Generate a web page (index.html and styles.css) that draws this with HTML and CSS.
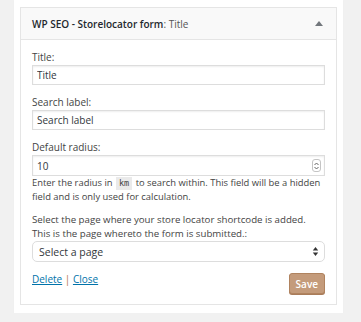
FILE: index.html
```html
<!DOCTYPE html>
<html lang="en">
<head>
    <meta charset="UTF-8">
    <title>WP SEO - Storelocator form</title>
    <link rel="stylesheet" href="styles.css">
</head>
<body>
    <div class="sidebar">
        <div class="widget">
            <div class="widget-top">
                <h3>WP SEO - Storelocator form<span class="in-title">: Title</span></h3>
                <span class="toggle"></span>
            </div>

            <div class="widget-inside">
                <p class="field">
                    <label for="title">Title:</label>
                    <input class="text" id="title" type="text" value="Title">
                </p>
                <p class="field">
                    <label for="search-label">Search label:</label>
                    <input class="text" id="search-label" type="text" value="Search label">
                </p>
                <div class="field">
                    <label for="radius">Default radius:</label>
                    <div class="number">
                        <input id="radius" type="text" value="10">
                        <span class="spin">
                            <svg width="7" height="10" viewBox="0 0 7 10"><path d="M1.5 4 L3.5 2 L5.5 4" fill="none" stroke="#666" stroke-width="1"/><path d="M1.5 6 L3.5 8 L5.5 6" fill="none" stroke="#666" stroke-width="1"/></svg>
                        </span>
                    </div>
                    <p class="help">Enter the radius in <code>km</code> to search within. This field will be a hidden field and is only used for calculation.</p>
                </div>
                <div class="field">
                    <label class="long" for="page">Select the page where your store locator shortcode is added. This is the page whereto the form is submitted.:</label>
                    <div class="select">
                        <select id="page">
                            <option>Select a page</option>
                        </select>
                        <svg width="7" height="11" viewBox="0 0 7 11"><path d="M0.8 4.5 L3.5 1 L6.2 4.5 Z" fill="#333"/><path d="M0.8 6.5 L3.5 10 L6.2 6.5 Z" fill="#333"/></svg>
                    </div>
                </div>

                <div class="actions">
                    <div class="links">
                        <a href="#">Delete</a> <span class="sep">|</span> <a href="#">Close</a>
                    </div>
                    <button type="button">Save</button>
                </div>
            </div>
        </div>
    </div>
</body>
</html>
```

FILE: styles.css
```css
body {
    margin: 0;
    background-color: #f1f1f1;
    font-family: 'Open Sans', sans-serif;
    font-size: 10px;
    color: #444;
}

.sidebar {
    width: 317px;
    margin-left: 14px;
    height: 299px;
    padding: 7px 6px 7px 6px;
    background-color: #fff;
    box-shadow: 0 1px 1px rgba(0, 0, 0, 0.04);
}

.widget {
    border: 1px solid #e5e5e5;
    background-color: #fff;
}

.widget-top {
    display: flex;
    align-items: center;
    justify-content: space-between;
    height: 31px;
    padding: 0 13px 0 11px;
    background-color: #f9f9f9;
    border-bottom: 1px solid #e5e5e5;
}

.widget-top h3 {
    margin: 0;
    font-size: 10px;
    font-weight: 600;
    color: #23282d;
}

.in-title {
    font-weight: 400;
    color: #555;
}

.toggle {
    width: 0;
    height: 0;
    border-left: 4px solid transparent;
    border-right: 4px solid transparent;
    border-bottom: 5px solid #72777c;
    margin-top: -1px;
}

.widget-inside {
    padding: 9px 11px 10px 11px;
}

.field {
    margin: 0 0 9px 0;
}

label {
    display: block;
    line-height: 16px;
}

label.long {
    font-size: 9.7px;
    line-height: 14px;
}

input.text,
.number {
    box-sizing: border-box;
    width: 100%;
    height: 20px;
    margin: 0;
    border: 1px solid #ddd;
    box-shadow: inset 0 1px 2px rgba(0, 0, 0, 0.07);
    background-color: #fff;
}

input.text,
.number input {
    padding: 0 4px;
    font-family: 'Open Sans', sans-serif;
    font-size: 10px;
    color: #32373c;
}

.number {
    display: flex;
    align-items: center;
    height: 21px;
    padding-right: 3px;
}

.number input {
    flex: 1;
    border: none;
    background: transparent;
    outline: none;
    height: 19px;
}

.spin {
    display: flex;
    align-items: center;
    justify-content: center;
    width: 7px;
    height: 11px;
    border: 1px solid #c4c4c4;
    border-radius: 3px;
}

.help {
    margin: 0;
    font-size: 9.4px;
    line-height: 14px;
}

code {
    display: inline-block;
    font-family: 'DejaVu Sans Mono', monospace;
    font-size: 8.5px;
    line-height: 13px;
    background-color: #eaeaea;
    padding: 0 3px;
    margin: 0 1px;
}

.select {
    display: flex;
    align-items: center;
    height: 21px;
    border: 1px solid #ddd;
    border-radius: 5px;
    padding-right: 5px;
    box-sizing: border-box;
}

.select select {
    flex: 1;
    appearance: none;
    -webkit-appearance: none;
    border: none;
    background: transparent;
    padding: 0 6px;
    font-family: 'Open Sans', sans-serif;
    font-size: 10.5px;
    color: #32373c;
    outline: none;
}

.actions {
    display: flex;
    justify-content: space-between;
    align-items: flex-start;
    padding-top: 2px;
}

.links {
    line-height: 12px;
    font-size: 10px;
}

.links a {
    color: #0073aa;
}

.sep {
    color: #b5733c;
}

button {
    height: 21px;
    padding: 0 6px;
    margin-top: 0;
    font-family: 'Open Sans', sans-serif;
    font-size: 10px;
    font-weight: 600;
    color: #fff;
    background-color: #c49b7b;
    border: 1px solid #b0835f;
    border-radius: 3px;
    box-shadow: 0 1px 0 #a97c5a;
}
```
